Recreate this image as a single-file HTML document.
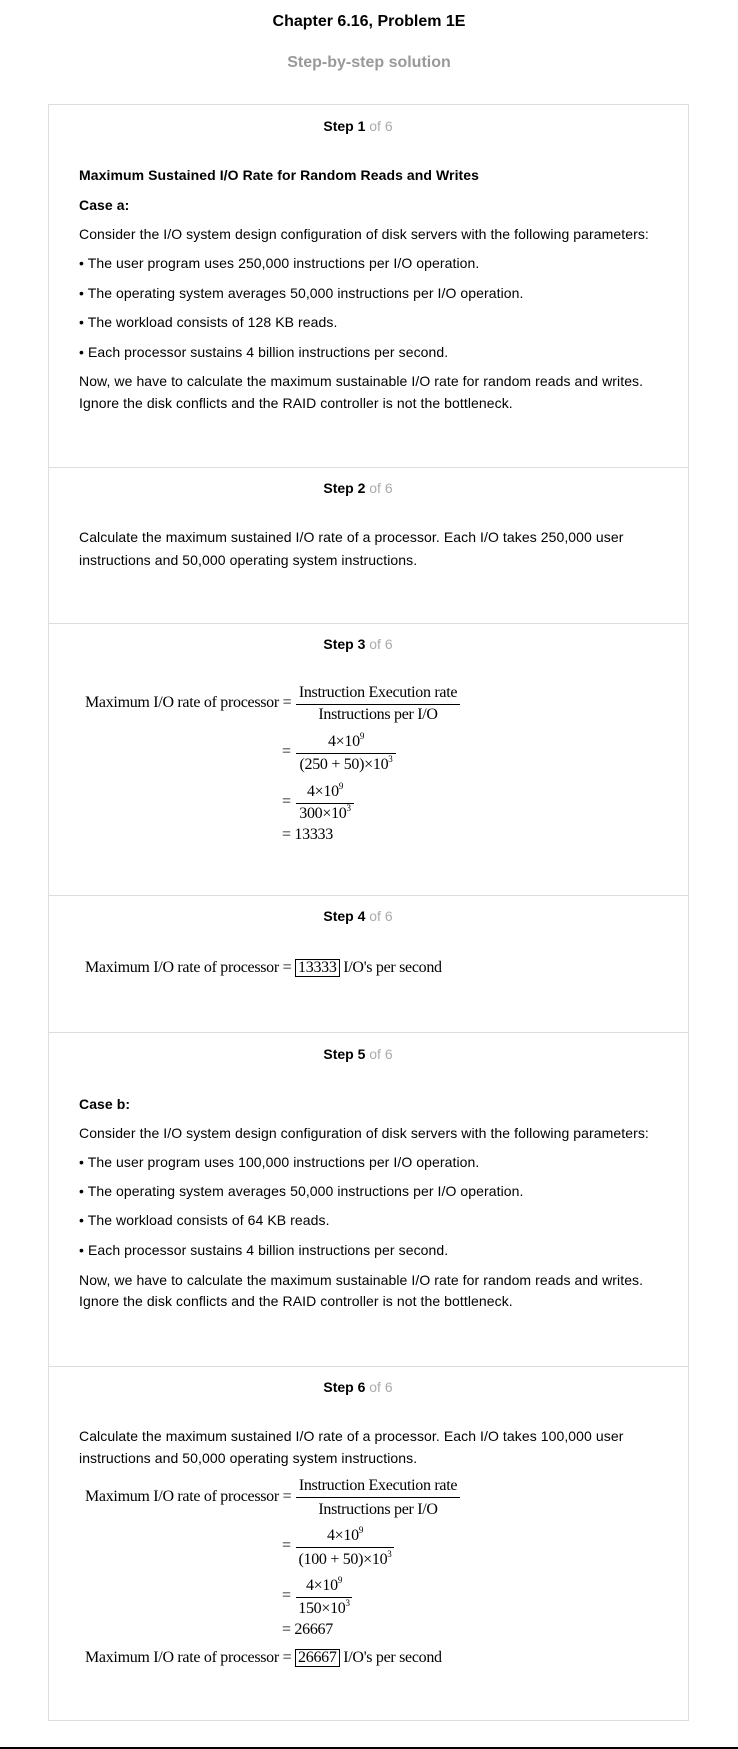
<!DOCTYPE html>
<html><head><meta charset="utf-8"><style>
*{margin:0;padding:0;box-sizing:border-box}
html,body{width:738px;height:1749px;background:#fff;overflow:hidden}
body{position:relative;font-family:"Liberation Sans",Arial,sans-serif;color:#000}
.a{position:absolute;white-space:nowrap;line-height:20px}
.t{font-size:14px;letter-spacing:0.08px}
.c{left:0;width:738px;text-align:center}
.st{font-size:14px;font-weight:bold;left:-11px}
.st span{color:#aaa;font-weight:normal}
.m{font-family:"Liberation Serif","Times New Roman",serif;font-size:16px;line-height:18px;letter-spacing:-0.3px}
.bar{position:absolute;height:1px;background:#000}
.hr{position:absolute;left:48px;width:641px;height:1px;background:#ddd}
.bx{border:1px solid #000;padding:0 2px;line-height:16px;display:inline-block}
sup{font-size:9px;vertical-align:7px;line-height:0}
</style></head><body>
<div class="a c" style="top:12px;font-size:16px;font-weight:bold">Chapter 6.16, Problem 1E</div>
<div class="a c" style="top:53px;font-size:16px;font-weight:bold;color:#999">Step-by-step solution</div>
<div style="position:absolute;left:48px;top:104px;width:641px;height:1617px;border:1px solid #ddd"></div>
<div class="hr" style="top:467px"></div>
<div class="hr" style="top:623px"></div>
<div class="hr" style="top:895px"></div>
<div class="hr" style="top:1032px"></div>
<div class="hr" style="top:1366px"></div>
<div style="position:absolute;left:0;top:1747px;width:738px;height:2px;background:#000"></div>

<div class="a c st" style="top:116px">Step 1 <span>of 6</span></div>
<div class="a t" style="left:79px;top:165px;font-weight:bold">Maximum Sustained I/O Rate for Random Reads and Writes</div>
<div class="a t" style="left:79px;top:195px;font-weight:bold">Case a:</div>
<div class="a t" style="left:79px;top:224px">Consider the I/O system design configuration of disk servers with the following parameters:</div>
<div class="a t" style="left:79px;top:253px">• The user program uses 250,000 instructions per I/O operation.</div>
<div class="a t" style="left:79px;top:283px">• The operating system averages 50,000 instructions per I/O operation.</div>
<div class="a t" style="left:79px;top:312px">• The workload consists of 128 KB reads.</div>
<div class="a t" style="left:79px;top:342px">• Each processor sustains 4 billion instructions per second.</div>
<div class="a t" style="left:79px;top:371px">Now, we have to calculate the maximum sustainable I/O rate for random reads and writes.</div>
<div class="a t" style="left:79px;top:393px">Ignore the disk conflicts and the RAID controller is not the bottleneck.</div>

<div class="a c st" style="top:478px">Step 2 <span>of 6</span></div>
<div class="a t" style="left:79px;top:527px">Calculate the maximum sustained I/O rate of a processor. Each I/O takes 250,000 user</div>
<div class="a t" style="left:79px;top:550px">instructions and 50,000 operating system instructions.</div>

<div class="a c st" style="top:634px">Step 3 <span>of 6</span></div>
<div class="a m" style="left:85px;top:694px">Maximum I/O rate of processor =</div>
<div class="a m" style="left:296px;top:684px;width:164px;text-align:center">Instruction Execution rate</div>
<div class="bar" style="left:296px;top:704px;width:164px"></div>
<div class="a m" style="left:296px;top:706px;width:164px;text-align:center">Instructions per I/O</div>
<div class="a m" style="left:282px;top:743px">=</div>
<div class="a m" style="left:296px;top:733px;width:100px;text-align:center">4×10<sup>9</sup></div>
<div class="bar" style="left:296px;top:753px;width:100px"></div>
<div class="a m" style="left:296px;top:756px;width:100px;text-align:center">(250 + 50)×10<sup>3</sup></div>
<div class="a m" style="left:282px;top:793px">=</div>
<div class="a m" style="left:296px;top:783px;width:58px;text-align:center">4×10<sup>9</sup></div>
<div class="bar" style="left:296px;top:803px;width:58px"></div>
<div class="a m" style="left:296px;top:805px;width:58px;text-align:center">300×10<sup>3</sup></div>
<div class="a m" style="left:282px;top:826px">= 13333</div>

<div class="a c st" style="top:906px">Step 4 <span>of 6</span></div>
<div class="a m" style="left:85px;top:959px">Maximum I/O rate of processor = <span class="bx">13333</span> I/O's per second</div>

<div class="a c st" style="top:1044px">Step 5 <span>of 6</span></div>
<div class="a t" style="left:79px;top:1094px;font-weight:bold">Case b:</div>
<div class="a t" style="left:79px;top:1123px">Consider the I/O system design configuration of disk servers with the following parameters:</div>
<div class="a t" style="left:79px;top:1152px">• The user program uses 100,000 instructions per I/O operation.</div>
<div class="a t" style="left:79px;top:1181px">• The operating system averages 50,000 instructions per I/O operation.</div>
<div class="a t" style="left:79px;top:1210px">• The workload consists of 64 KB reads.</div>
<div class="a t" style="left:79px;top:1240px">• Each processor sustains 4 billion instructions per second.</div>
<div class="a t" style="left:79px;top:1270px">Now, we have to calculate the maximum sustainable I/O rate for random reads and writes.</div>
<div class="a t" style="left:79px;top:1291px">Ignore the disk conflicts and the RAID controller is not the bottleneck.</div>

<div class="a c st" style="top:1377px">Step 6 <span>of 6</span></div>
<div class="a t" style="left:79px;top:1426px">Calculate the maximum sustained I/O rate of a processor. Each I/O takes 100,000 user</div>
<div class="a t" style="left:79px;top:1448px">instructions and 50,000 operating system instructions.</div>
<div class="a m" style="left:85px;top:1488px">Maximum I/O rate of processor =</div>
<div class="a m" style="left:296px;top:1477px;width:164px;text-align:center">Instruction Execution rate</div>
<div class="bar" style="left:296px;top:1497px;width:164px"></div>
<div class="a m" style="left:296px;top:1501px;width:164px;text-align:center">Instructions per I/O</div>
<div class="a m" style="left:282px;top:1537px">=</div>
<div class="a m" style="left:296px;top:1527px;width:98px;text-align:center">4×10<sup>9</sup></div>
<div class="bar" style="left:296px;top:1547px;width:98px"></div>
<div class="a m" style="left:296px;top:1551px;width:98px;text-align:center">(100 + 50)×10<sup>3</sup></div>
<div class="a m" style="left:282px;top:1587px">=</div>
<div class="a m" style="left:296px;top:1577px;width:56px;text-align:center">4×10<sup>9</sup></div>
<div class="bar" style="left:296px;top:1597px;width:56px"></div>
<div class="a m" style="left:296px;top:1600px;width:56px;text-align:center">150×10<sup>3</sup></div>
<div class="a m" style="left:282px;top:1621px">= 26667</div>
<div class="a m" style="left:85px;top:1649px">Maximum I/O rate of processor = <span class="bx">26667</span> I/O's per second</div>
</body></html>
